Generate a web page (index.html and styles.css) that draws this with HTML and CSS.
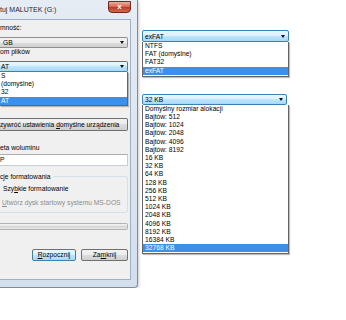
FILE: index.html
```html
<!DOCTYPE html>
<html lang="pl">
<head>
  <meta charset="UTF-8">
  <title>Formatuj MALUTEK (G:)</title>
  <link rel="stylesheet" href="styles.css">
</head>
<body>
  <div class="window">
    <div class="titlebar">
      <span class="title">tuj MALUTEK (G:)</span>
      <span class="close-btn">x</span>
    </div>
    <div class="client">
      <div class="label">mność:</div>
      <div class="combo indent"><span>GB</span><span class="arrow"></span></div>
      <div class="label">om plików</div>
      <div class="combo focused"><span>AT</span><span class="arrow"></span></div>
      <ul class="list">
        <li>S</li>
        <li>(domyślne)</li>
        <li>32</li>
        <li class="selected">AT</li>
      </ul>
      <div class="btn wide"><span>zywróć ustawienia <u>d</u>omyślne urządzenia</span></div>
      <div class="label spaced">eta woluminu</div>
      <div class="textbox">P</div>
      <fieldset class="group">
        <legend>cje formatowania</legend>
        <div class="option">Szy<u>b</u>kie formatowanie</div>
        <div class="option disabled"><u>U</u>twórz dysk startowy systemu MS-DOS</div>
      </fieldset>
      <div class="progress"></div>
      <div class="actions">
        <div class="btn default start"><span><u>R</u>ozpocznij</span></div>
        <div class="btn close"><span>Za<u>m</u>knij</span></div>
      </div>
    </div>
  </div>

  <div class="popups">
    <div class="combo focused"><span>exFAT</span><span class="arrow"></span></div>
    <ul class="list">
      <li>NTFS</li>
      <li>FAT (domyślne)</li>
      <li>FAT32</li>
      <li class="selected">exFAT</li>
    </ul>

    <div class="combo focused second"><span>32 KB</span><span class="arrow"></span></div>
    <ul class="list">
      <li>Domyślny rozmiar alokacji</li>
      <li>Bajtów: 512</li>
      <li>Bajtów: 1024</li>
      <li>Bajtów: 2048</li>
      <li>Bajtów: 4096</li>
      <li>Bajtów: 8192</li>
      <li>16 KB</li>
      <li>32 KB</li>
      <li>64 KB</li>
      <li>128 KB</li>
      <li>256 KB</li>
      <li>512 KB</li>
      <li>1024 KB</li>
      <li>2048 KB</li>
      <li>4096 KB</li>
      <li>8192 KB</li>
      <li>16384 KB</li>
      <li class="selected">32768 KB</li>
    </ul>
  </div>
</body>
</html>
```

FILE: styles.css
```css
* {
  box-sizing: border-box;
}
body {
  margin: 0;
  background: #fff;
  font-family: 'Liberation Sans', 'DejaVu Sans', sans-serif;
  font-size: 6.7px;
  color: #000;
  display: flex;
  align-items: flex-start;
  gap: 4px;
}
.window {
  width: 138px;
  height: 288px;
  display: flex;
  flex-direction: column;
  background: linear-gradient(#e6ecf4, #d3dfec);
  border: 1px solid #7d8b9b;
  border-left: 0;
  border-top: 0;
  border-radius: 0 0 4px 0;
  box-shadow: 1px 1px 3px rgba(0,0,0,0.2);
}
.titlebar {
  height: 19px;
  flex-shrink: 0;
  display: flex;
  align-items: center;
  justify-content: space-between;
  padding-right: 6px;
}
.title {
  font-size: 7px;
  color: #1c2633;
}
.close-btn {
  align-self: flex-start;
  margin-top: 1px;
  width: 23px;
  height: 12px;
  background: linear-gradient(#eab0a4, #d66a55 45%, #c13b22 55%, #d9674e);
  border: 1px solid #6c2a1f;
  border-radius: 0 0 4px 4px;
  color: #fff;
  font-size: 8px;
  font-weight: bold;
  line-height: 9px;
  text-align: center;
}
.client {
  flex: 1;
  margin: 0 6px 7px 0;
  background: #f0f0f0;
  border: 1px solid #9fb0c4;
  border-left: 0;
  padding: 4px 2px 0 0;
  display: flex;
  flex-direction: column;
}
.label {
  line-height: 8px;
}
.combo {
  height: 11px;
  margin-top: 5px;
  display: flex;
  align-items: center;
  justify-content: space-between;
  padding: 0 3px 0 1px;
  background: linear-gradient(#f3f3f3, #ebebeb 50%, #dddddd 50%, #d0d0d0);
  border: 1px solid #8e8f8f;
  border-left: 0;
  border-radius: 0 2px 2px 0;
}
.combo.indent {
  padding-left: 3px;
}
.combo.focused {
  background: linear-gradient(#eaf6fd, #d9f0fc 50%, #bee6fd 50%, #a7d9f5);
  border-color: #3c7fb1;
}
.arrow {
  width: 0;
  height: 0;
  border-left: 2.5px solid transparent;
  border-right: 2.5px solid transparent;
  border-top: 3px solid #111;
}
.list {
  list-style: none;
  margin: 0;
  padding: 0;
  background: #fff;
  border: 1px solid #646464;
  border-top: 0;
  box-shadow: 1px 1px 1px rgba(0,0,0,0.25);
}
.client .list {
  border-left: 0;
}
.list li {
  line-height: 8.2px;
  padding-left: 1px;
  white-space: nowrap;
}
.list li.selected {
  background: #3d8fe8;
  color: #fff;
}
.btn {
  height: 12px;
  display: flex;
  align-items: center;
  justify-content: center;
  background: linear-gradient(#f2f2f2, #ebebeb 50%, #dddddd 50%, #cfcfcf);
  border: 1px solid #707070;
  border-radius: 2px;
  white-space: nowrap;
}
.btn.wide {
  height: 13px;
  margin-top: 12px;
  border-left: 0;
  border-radius: 0 2px 2px 0;
  justify-content: flex-start;
}
.btn.default {
  background: linear-gradient(#eaf6fd, #d9f0fc 50%, #bee6fd 50%, #a7d9f5);
  border-color: #3c7fb1;
}
.label.spaced {
  margin-top: 13px;
}
.textbox {
  height: 12px;
  margin-top: 2px;
  background: #fff;
  border: 1px solid #c5cdd6;
  border-top-color: #abadb3;
  border-left: 0;
  line-height: 10px;
}
.group {
  margin: 6px 0 0;
  padding: 0 0 5px;
  border: 1px solid #d5dfe5;
  border-left: 0;
  border-radius: 0 3px 3px 0;
}
.group legend {
  padding: 0 2px 0 0;
  line-height: 9px;
}
.option {
  margin-top: 4px;
  padding-left: 3px;
  line-height: 8px;
}
.option + .option {
  margin-top: 6px;
  padding-left: 2px;
}
.option.disabled {
  color: #8d8d8d;
}
.progress {
  height: 7px;
  margin-top: 10px;
  background: linear-gradient(#f3f3f3, #e0e0e0 50%, #d6d6d6 50%, #e6e6e6);
  border: 1px solid #b2b2b2;
  border-left: 0;
  border-radius: 0 2px 2px 0;
}
.actions {
  margin-top: 19px;
  display: flex;
  justify-content: flex-end;
  gap: 5px;
}
.btn.start {
  width: 44px;
}
.btn.close {
  width: 47px;
}
.popups {
  width: 147px;
  margin-top: 30px;
  display: flex;
  flex-direction: column;
}
.popups .combo {
  height: 12px;
  margin-top: 0;
  border-left: 1px solid #3c7fb1;
  border-radius: 2px;
  padding-left: 2px;
}
.popups .combo.second {
  width: 145px;
  height: 11px;
  margin-top: 17px;
}
.popups .list li {
  padding-left: 2px;
}
.popups .list li:last-child {
  margin-bottom: 1px;
}
```
